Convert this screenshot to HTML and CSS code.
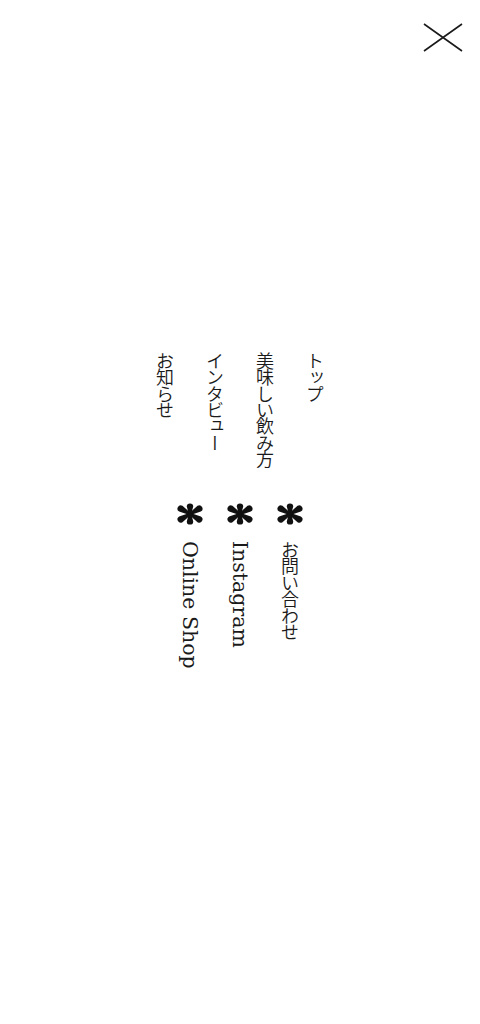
FILE: index.html
```html
<!DOCTYPE html>
<html lang="ja">
<head>
<meta charset="utf-8">
<title>Menu</title>
<link rel="stylesheet" href="styles.css">
</head>
<body>
<div class="menu">
  <header class="menu-head">
    <button class="close" aria-label="閉じる">
      <svg width="40" height="29" viewBox="0 0 40 29"><path d="M1 1 L39 28 M39 1 L1 28" stroke="#1a1a1a" stroke-width="1.6" fill="none"/></svg>
    </button>
  </header>
  <nav class="nav">
    <ul class="nav-main">
      <li>トップ</li>
      <li>美味しい飲み方</li>
      <li>インタビュー</li>
      <li>お知らせ</li>
    </ul>
    <ul class="nav-sub">
      <li class="sub-item">
        <svg class="star" viewBox="-14 -11 28 22" width="28" height="22"><use href="#ast"/></svg>
        <span class="sub-text sub-ja">お問い合わせ</span>
      </li>
      <li class="sub-item">
        <svg class="star" viewBox="-14 -11 28 22" width="28" height="22"><use href="#ast"/></svg>
        <span class="sub-text">Instagram</span>
      </li>
      <li class="sub-item">
        <svg class="star" viewBox="-14 -11 28 22" width="28" height="22"><use href="#ast"/></svg>
        <span class="sub-text">Online Shop</span>
      </li>
    </ul>
  </nav>
</div>
<svg width="0" height="0" class="defs">
  <defs>
    <g id="ast" fill="#111">
      <path d="M0 -1.2 L7.4 -3.2 A3.2 3.2 0 0 1 7.4 3.2 L0 1.2 Z" transform="rotate(90)"/>
      <path d="M0 -1.2 L7.4 -3.2 A3.2 3.2 0 0 1 7.4 3.2 L0 1.2 Z" transform="rotate(-90)"/>
      <path d="M0 -1.2 L10.6 -3.3 A3.3 3.3 0 0 1 10.6 3.3 L0 1.2 Z" transform="rotate(-30)"/>
      <path d="M0 -1.2 L10.6 -3.3 A3.3 3.3 0 0 1 10.6 3.3 L0 1.2 Z" transform="rotate(30)"/>
      <path d="M0 -1.2 L10.6 -3.3 A3.3 3.3 0 0 1 10.6 3.3 L0 1.2 Z" transform="rotate(150)"/>
      <path d="M0 -1.2 L10.6 -3.3 A3.3 3.3 0 0 1 10.6 3.3 L0 1.2 Z" transform="rotate(210)"/>
      <circle r="2.4"/>
    </g>
  </defs>
</svg>
</body>
</html>
```
FILE: styles.css
```css
html, body {
  margin: 0;
  padding: 0;
  background: #fff;
}
body {
  font-family: "DejaVu Serif", "Noto Sans CJK JP", serif;
  color: #1a1a1a;
}
.menu {
  height: 1024px;
  display: flex;
  flex-direction: column;
}
.menu-head {
  display: flex;
  justify-content: flex-end;
  padding: 23px 17px 0 0;
}
.close {
  background: none;
  border: 0;
  padding: 0;
  margin: 0;
  line-height: 0;
  cursor: pointer;
}
.defs {
  position: absolute;
}
.nav {
  display: flex;
  flex-direction: column;
  align-items: center;
  padding-top: 300px;
}
.nav-main {
  list-style: none;
  margin: 0;
  padding: 0;
  writing-mode: vertical-rl;
  font-size: 18px;
  letter-spacing: -1.6px;
  line-height: 50px;
  font-family: "Noto Sans CJK JP", sans-serif;
  font-weight: 350;
}
.nav-main li {
  margin: 0;
}
.nav-sub {
  list-style: none;
  margin: 36px 0 0;
  padding: 0;
  display: flex;
  flex-direction: row-reverse;
}
.sub-item {
  width: 50px;
  display: flex;
  flex-direction: column;
  align-items: center;
  gap: 16px;
}
.star {
  display: block;
}
.sub-text {
  writing-mode: vertical-rl;
  font-size: 20.5px;
  line-height: 20px;
}
.sub-ja {
  font-family: "Noto Sans CJK JP", sans-serif;
  font-size: 18px;
  font-weight: 350;
  letter-spacing: -1.5px;
}
```
